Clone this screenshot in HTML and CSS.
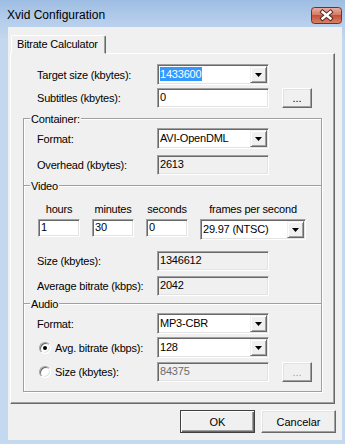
FILE: index.html
```html
<!DOCTYPE html>
<html lang="en">
<head>
  <meta charset="UTF-8">
  <title>Xvid Configuration</title>
  <link rel="stylesheet" href="styles.css">
</head>
<body>
  <div class="window">
    <div class="titlebar">
      <span class="title">Xvid Configuration</span>
      <svg class="close" width="31" height="17" viewBox="0 0 31 17">
        <defs>
          <linearGradient id="cg" x1="0" y1="0" x2="0" y2="1">
            <stop offset="0" stop-color="#eab0a2"/>
            <stop offset="0.45" stop-color="#d77a66"/>
            <stop offset="0.5" stop-color="#c5503b"/>
            <stop offset="1" stop-color="#d98568"/>
          </linearGradient>
        </defs>
        <rect x="0.5" y="0.5" width="30" height="16" rx="3" fill="url(#cg)" stroke="#6e3128"/>
        <path d="M11.5 5 L19.5 11.5 M19.5 5 L11.5 11.5" stroke="#4a2520" stroke-width="4.2" stroke-linecap="square"/>
        <path d="M11.5 5 L19.5 11.5 M19.5 5 L11.5 11.5" stroke="#fff" stroke-width="2.4" stroke-linecap="square"/>
      </svg>
    </div>

    <div class="client">
      <div class="tabs">
        <div class="tab">Bitrate Calculator</div>
      </div>

      <div class="panel">
        <div class="row top h21">
          <span class="lbl">Target size (kbytes):</span>
          <div class="combo"><span class="val"><span class="sel">1433600</span></span><span class="drop"><svg width="7" height="4"><polygon points="0,0 7,0 3.5,4"/></svg></span></div>
        </div>
        <div class="row top h20 m3">
          <span class="lbl">Subtitles (kbytes):</span>
          <div class="edit">0</div>
          <button class="btn dots">...</button>
        </div>

        <div class="groups">
          <div class="sec container">
            <div class="sec-line"><span class="legend">Container:</span></div>
            <div class="row h21 m9">
              <span class="lbl">Format:</span>
              <div class="combo"><span class="val">AVI-OpenDML</span><span class="drop"><svg width="7" height="4"><polygon points="0,0 7,0 3.5,4"/></svg></span></div>
            </div>
            <div class="row h20 m6">
              <span class="lbl">Overhead (kbytes):</span>
              <div class="edit ro">2613</div>
            </div>
          </div>

          <div class="sec video">
            <div class="sec-line"><span class="legend">Video</span></div>
            <div class="time">
              <div class="col">
                <span class="hd">hours</span>
                <div class="edit small">1</div>
              </div>
              <div class="col">
                <span class="hd">minutes</span>
                <div class="edit small">30</div>
              </div>
              <div class="col">
                <span class="hd">seconds</span>
                <div class="edit small">0</div>
              </div>
              <div class="col fps">
                <span class="hd">frames per second</span>
                <div class="combo"><span class="val">29.97 (NTSC)</span><span class="drop"><svg width="7" height="4"><polygon points="0,0 7,0 3.5,4"/></svg></span></div>
              </div>
            </div>
            <div class="row h20 m11">
              <span class="lbl">Size (kbytes):</span>
              <div class="edit ro">1346612</div>
            </div>
            <div class="row h20 m5">
              <span class="lbl">Average bitrate (kbps):</span>
              <div class="edit ro">2042</div>
            </div>
          </div>

          <div class="sec audio">
            <div class="sec-line"><span class="legend">Audio</span></div>
            <div class="row h21 m9">
              <span class="lbl">Format:</span>
              <div class="combo"><span class="val">MP3-CBR</span><span class="drop"><svg width="7" height="4"><polygon points="0,0 7,0 3.5,4"/></svg></span></div>
            </div>
            <div class="row h21 m3">
              <span class="lbl"><i class="radio on"></i>Avg. bitrate (kbps):</span>
              <div class="combo"><span class="val">128</span><span class="drop"><svg width="7" height="4"><polygon points="0,0 7,0 3.5,4"/></svg></span></div>
            </div>
            <div class="row h20 m4">
              <span class="lbl"><i class="radio"></i>Size (kbytes):</span>
              <div class="edit ro off">84375</div>
              <button class="btn dots off">...</button>
            </div>
          </div>
        </div>
      </div>

      <div class="actions">
        <button class="btn push default">OK</button>
        <button class="btn push">Cancelar</button>
      </div>
    </div>
  </div>
</body>
</html>
```

FILE: styles.css
```css
* {
  box-sizing: border-box;
}
body {
  margin: 0;
  font: 11px "Liberation Sans", Arial, sans-serif;
  letter-spacing: -0.2px;
  color: #000;
}
.window {
  width: 345px;
  height: 444px;
  display: flex;
  flex-direction: column;
  overflow: hidden;
  background: linear-gradient(#9ebde3, #b6ceeb 22px, #c3d7ef 40px, #c4d8ef);
}

/* title bar */
.titlebar {
  height: 27px;
  display: flex;
  align-items: flex-start;
  padding-left: 7px;
}
.title {
  margin-top: 8px;
  font-size: 12px;
  line-height: 15px;
  letter-spacing: 0;
}
.close {
  display: block;
  margin: 7px 3px 0 auto;
}

/* dialog body */
.client {
  flex: 1;
  margin: 0 3px 4px 8px;
  background: #f0f0f0;
}
.tabs {
  padding: 8px 0 0 3px;
  display: flex;
}
.tab {
  position: relative;
  z-index: 1;
  width: 95px;
  height: 19px;
  margin-bottom: -1px;
  padding-left: 5px;
  line-height: 16px;
  background: #f0f0f0;
  border: 1px solid;
  border-color: #fff #696969 transparent #fff;
  border-radius: 2px 2px 0 0;
  box-shadow: inset -1px 0 #a0a0a0;
}
.panel {
  width: 325px;
  height: 351px;
  margin-left: 2px;
  padding: 10px 0 0 12px;
  border: 1px solid;
  border-color: #fff #696969 #696969 #fff;
  box-shadow: inset -1px -1px #a0a0a0;
}

/* rows */
.row {
  display: flex;
  align-items: center;
}
.row.top {
  padding-left: 14px;
}
.h20 { height: 20px; }
.h21 { height: 21px; }
.m3 { margin-top: 3px; }
.m4 { margin-top: 4px; }
.m5 { margin-top: 5px; }
.m6 { margin-top: 6px; }
.m9 { margin-top: 9px; }
.m11 { margin-top: 11px; }

.lbl {
  width: 120px;
  flex: none;
  display: flex;
  align-items: center;
  white-space: nowrap;
}

/* sunken fields */
.edit,
.combo {
  width: 112px;
  height: 100%;
  border: 1px solid;
  border-color: #a0a0a0 #fff #fff #a0a0a0;
  box-shadow: inset 1px 1px #696969, inset -1px -1px #e3e3e3;
  background: #fff;
}
.edit {
  padding: 0 2px;
  line-height: 17px;
}
.edit.ro {
  background: #f0f0f0;
}
.edit.off {
  color: #6d6d6d;
}
.combo {
  display: flex;
  padding: 1px;
}
.combo .val {
  flex: 1;
  padding: 1px 0 0 1px;
  line-height: 14px;
}
.sel {
  display: inline-block;
  padding: 0 1px 0 0;
  background: #3399ff;
  color: #fff;
}
.drop {
  width: 17px;
  display: flex;
  align-items: center;
  justify-content: center;
  background: #f0f0f0;
  border: 1px solid;
  border-color: #f0f0f0 #696969 #696969 #f0f0f0;
  box-shadow: inset 1px 1px #fff, inset -1px -1px #a0a0a0;
}
.drop svg {
  display: block;
  margin-top: 1px;
}

/* raised buttons */
.btn {
  font: inherit;
  color: #000;
  padding: 0;
  background: #f0f0f0;
  border: 1px solid;
  border-color: #fff #696969 #696969 #fff;
  box-shadow: inset -1px -1px #a0a0a0, inset 1px 1px #e3e3e3;
}
.btn.dots {
  width: 30px;
  height: 20px;
  margin-left: 13px;
  line-height: 12px;
}
.btn.off {
  color: #a0a0a0;
}
.push {
  width: 75px;
  height: 23px;
}
.push.default {
  border-color: #404040;
  box-shadow: inset 1px 1px #fff, inset -1px -1px #696969, inset -2px -2px #a0a0a0;
}

/* group boxes */
.groups {
  width: 299px;
  height: 274px;
  margin-top: 10px;
  border: 1px solid #a0a0a0;
  border-top: 0;
  box-shadow: 1px 1px #fff, inset 1px 0 #fff;
}
.sec {
  border-top: 1px solid #a0a0a0;
  box-shadow: inset 0 1px #fff;
}
.sec .row {
  padding-left: 13px;
}
.container { padding-bottom: 10px; }
.video { padding-bottom: 7px; }
.sec-line {
  height: 0;
  display: flex;
  align-items: center;
  padding-left: 6px;
}
.legend {
  padding: 0 1px;
  line-height: 13px;
  background: #f0f0f0;
}

/* video time fields */
.time {
  display: flex;
  gap: 12px;
  margin-top: 17px;
  padding-left: 14px;
}
.col {
  width: 42px;
  display: flex;
  flex-direction: column;
  align-items: center;
}
.col.fps {
  width: 106px;
}
.hd {
  height: 13px;
  line-height: 13px;
  white-space: nowrap;
}
.edit.small {
  width: 42px;
  height: 18px;
  margin-top: 3px;
  line-height: 15px;
  align-self: stretch;
}
.fps .combo {
  width: 106px;
  height: 21px;
  margin-top: 3px;
}

/* radios */
.radio {
  width: 12px;
  height: 12px;
  margin: 0 4px 0 2px;
  border-radius: 50%;
  border: 1px solid;
  border-color: #a0a0a0 #fff #fff #a0a0a0;
  box-shadow: inset 1px 1px #696969, inset -1px -1px #e3e3e3;
  background: #fff;
  display: flex;
  align-items: center;
  justify-content: center;
}
.radio.on::after {
  content: "";
  width: 4px;
  height: 4px;
  border-radius: 50%;
  background: #000;
}

/* dialog buttons */
.actions {
  display: flex;
  justify-content: flex-end;
  gap: 6px;
  margin-top: 6px;
  padding-right: 6px;
}
```
